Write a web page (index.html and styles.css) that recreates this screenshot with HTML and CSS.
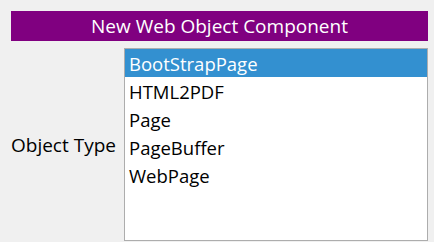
FILE: index.html
```html
<!DOCTYPE html>
<html>
<head>
<meta charset="utf-8">
<link rel="stylesheet" href="styles.css">
</head>
<body>
<div class="dialog">
  <div class="title">New Web Object Component</div>
  <div class="row">
    <div class="label">Object Type</div>
    <div class="listbox">
      <div class="item selected">BootStrapPage</div>
      <div class="item">HTML2PDF</div>
      <div class="item">Page</div>
      <div class="item">PageBuffer</div>
      <div class="item">WebPage</div>
    </div>
  </div>
</div>
</body>
</html>
```
FILE: styles.css
```css
html, body {
  margin: 0;
  padding: 0;
  background: #f0f0f0;
  width: 434px;
  height: 242px;
  overflow: hidden;
}
.dialog {
  padding: 11px 6px 0 11px;
  font-family: "Open Sans", sans-serif;
}
.title {
  background: #800080;
  color: #ffffff;
  height: 30px;
  line-height: 30px;
  text-align: center;
  font-size: 19px;
}
.row {
  display: flex;
  align-items: center;
  margin-top: 7px;
}
.label {
  width: 113px;
  font-size: 19px;
  color: #000;
}
.listbox {
  flex: 1;
  height: 191px;
  border: 1px solid #adadad;
  background: #fff;
}
.item {
  height: 28px;
  box-sizing: border-box;
  padding-top: 2px;
  line-height: 26px;
  padding-left: 4px;
  font-size: 18.5px;
  color: #000;
}
.item.selected {
  background: #3390d0;
  color: #fff;
}
```
